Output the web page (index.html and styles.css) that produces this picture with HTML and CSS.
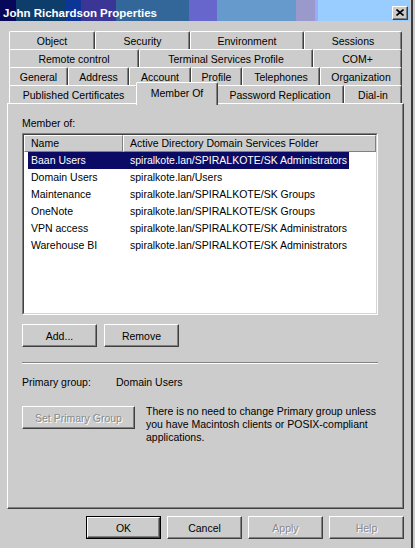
FILE: index.html
```html
<!DOCTYPE html>
<html>
<head>
<meta charset="utf-8">
<link rel="stylesheet" href="styles.css">
</head>
<body>
<div class="window">
  <div class="titlebar">
    <span class="title">John Richardson Properties</span>
    <span class="close"><svg width="8" height="7" viewBox="0 0 8 7"><path d="M0.5 0.5L7.5 6.5M7.5 0.5L0.5 6.5" stroke="#000" stroke-width="1.6" fill="none"/></svg></span>
  </div>
  <div class="content">
    <div class="tabs">
      <div class="tabrow r1">
        <div class="tab">Object</div>
        <div class="tab">Security</div>
        <div class="tab">Environment</div>
        <div class="tab">Sessions</div>
      </div>
      <div class="tabrow r2">
        <div class="tab">Remote control</div>
        <div class="tab">Terminal Services Profile</div>
        <div class="tab">COM+</div>
      </div>
      <div class="tabrow r3">
        <div class="tab">General</div>
        <div class="tab">Address</div>
        <div class="tab">Account</div>
        <div class="tab">Profile</div>
        <div class="tab">Telephones</div>
        <div class="tab">Organization</div>
      </div>
      <div class="tabrow r4">
        <div class="tab">Published Certificates</div>
        <div class="tab active">Member Of</div>
        <div class="tab">Password Replication</div>
        <div class="tab">Dial-in</div>
      </div>
    </div>
    <div class="panel">
      <div class="label">Member of:</div>
      <div class="list">
        <div class="list-inner">
          <div class="lhead">
            <div class="hcell h1">Name</div>
            <div class="hcell h2">Active Directory Domain Services Folder</div>
          </div>
          <div class="lrow sel"><span class="c1">Baan Users</span><span class="c2">spiralkote.lan/SPIRALKOTE/SK Administrators</span></div>
          <div class="lrow"><span class="c1">Domain Users</span><span class="c2">spiralkote.lan/Users</span></div>
          <div class="lrow"><span class="c1">Maintenance</span><span class="c2">spiralkote.lan/SPIRALKOTE/SK Groups</span></div>
          <div class="lrow"><span class="c1">OneNote</span><span class="c2">spiralkote.lan/SPIRALKOTE/SK Groups</span></div>
          <div class="lrow"><span class="c1">VPN access</span><span class="c2">spiralkote.lan/SPIRALKOTE/SK Administrators</span></div>
          <div class="lrow"><span class="c1">Warehouse BI</span><span class="c2">spiralkote.lan/SPIRALKOTE/SK Administrators</span></div>
        </div>
      </div>
      <div class="btnrow">
        <div class="btn">Add...</div>
        <div class="btn">Remove</div>
      </div>
      <div class="sep"></div>
      <div class="prow"><span class="plabel">Primary group:</span><span>Domain Users</span></div>
      <div class="setrow">
        <div class="btn wide disabled">Set Primary Group</div>
        <p class="note">There is no need to change Primary group unless<br>you have Macintosh clients or POSIX-compliant<br>applications.</p>
      </div>
    </div>
    <div class="footer">
      <div class="btn default"><span>OK</span></div>
      <div class="btn">Cancel</div>
      <div class="btn disabled">Apply</div>
      <div class="btn disabled">Help</div>
    </div>
  </div>
</div>
</body>
</html>
```

FILE: styles.css
```css
html, body {
  margin: 0;
  padding: 0;
  background: #cccccc;
}
body {
  font-family: "Liberation Sans", Arial, sans-serif;
  font-size: 10.5px;
  color: #000;
  width: 415px;
  height: 548px;
  overflow: hidden;
}
.window {
  width: 411px;
  height: 548px;
  border-right: 2px solid #3a3a3a;
  background: #cccccc;
}
.titlebar {
  height: 21px;
  box-sizing: border-box;
  padding: 4px 2px 0 3px;
  display: flex;
  align-items: center;
  width: 410px;
  background: linear-gradient(to right,
    #08085a 0, #08085a 16px,
    #0d3d6b 16px, #0d3d6b 65px,
    #0b3596 65px, #0b3596 81px,
    #3b3596 81px, #3b3596 116px,
    #336699 116px, #336699 189px,
    #6666cc 189px, #6666cc 217px,
    #6699cc 217px, #6699cc 296px,
    #9999cc 296px, #9999cc 315px,
    #99aaff 315px, #99aaff 318px,
    #99ccff 318px, #99ccff 100%);
}
.title {
  color: #fff;
  font-weight: bold;
  font-size: 11.5px;
  white-space: nowrap;
}
.close {
  margin-left: auto;
  width: 16px;
  height: 14px;
  box-sizing: border-box;
  background: #cccccc;
  border: 1px solid;
  border-color: #fff #404040 #404040 #fff;
  box-shadow: inset -1px -1px #808080;
  display: flex;
  align-items: center;
  justify-content: center;
}
.close svg { display: block; }

.content {
  padding: 10px 0 0 7px;
}
.tabs {
  margin-left: 2px;
  width: 393px;
}
.tabrow {
  display: grid;
  height: 18px;
}
.r1 { grid-template-columns: 86px 95px 114px 98px; }
.r2 { grid-template-columns: 130px 174px 89px; }
.r3 { grid-template-columns: 59px 61px 62px 51px 78px 82px; }
.r4 { grid-template-columns: 129px 78px 128px 58px; }
.tab {
  box-sizing: border-box;
  border-top: 1px solid #fff;
  border-left: 1px solid #fff;
  border-right: 1px solid #404040;
  box-shadow: inset -1px 0 #808080;
  border-radius: 2px 2px 0 0;
  text-align: center;
  line-height: 18px;
  white-space: nowrap;
  background: #cccccc;
}
.tab.active {
  margin: -3px -2px -1px -2px;
  line-height: 20px;
  position: relative;
  z-index: 2;
}

.panel {
  width: 397px;
  height: 406px;
  box-sizing: border-box;
  border: 1px solid;
  border-color: #fff #404040 #404040 #fff;
  box-shadow: inset -1px -1px #808080;
  padding-left: 14px;
  position: relative;
  z-index: 1;
}
.label {
  margin-top: 13px;
  line-height: 13px;
  height: 13px;
}
.list {
  margin-top: 3px;
  width: 356px;
  height: 182px;
  box-sizing: border-box;
  border: 1px solid;
  border-color: #808080 #fff #fff #808080;
}
.list-inner {
  height: 100%;
  box-sizing: border-box;
  border: 1px solid;
  border-color: #404040 #d4d4d4 #d4d4d4 #404040;
  background: #fff;
}
.lhead {
  display: flex;
  height: 17px;
}
.hcell {
  box-sizing: border-box;
  background: #cccccc;
  border: 1px solid;
  border-color: #fff #808080 #808080 #fff;
  line-height: 15px;
  padding-left: 6px;
  white-space: nowrap;
}
.h1 { width: 99px; }
.h2 { width: 253px; padding-left: 6px; }
.lrow {
  display: flex;
  width: max-content;
  margin-left: 4px;
  height: 17px;
  line-height: 17px;
  white-space: nowrap;
}
.lrow .c1 {
  width: 96px;
  box-sizing: border-box;
  padding-left: 3px;
}
.lrow .c2 {
  padding: 0 2px 0 6px;
}
.lrow.sel {
  background: #0b0b66;
  color: #fff;
}

.btnrow {
  display: flex;
  gap: 7px;
  margin-top: 9px;
}
.btn {
  width: 75px;
  height: 23px;
  box-sizing: border-box;
  border: 1px solid;
  border-color: #fff #404040 #404040 #fff;
  box-shadow: inset -1px -1px #808080;
  background: #cccccc;
  display: flex;
  align-items: center;
  justify-content: center;
  white-space: nowrap;
}
.btn.wide { width: 113px; }
.btn.disabled {
  color: #8a8a8a;
  text-shadow: 1px 1px 0 #fff;
}
.btn.default {
  border: 1px solid #000;
  box-shadow: none;
  padding: 0;
}
.btn.default span {
  flex: 1;
  align-self: stretch;
  display: flex;
  align-items: center;
  justify-content: center;
  border: 1px solid;
  border-color: #fff #404040 #404040 #fff;
  box-shadow: inset -1px -1px #808080;
}
.sep {
  margin-top: 15px;
  width: 356px;
  border-top: 1px solid #808080;
  border-bottom: 1px solid #fff;
  height: 0;
}
.prow {
  display: flex;
  margin-top: 12px;
  line-height: 13px;
}
.plabel {
  width: 94px;
}
.setrow {
  display: flex;
  align-items: flex-start;
  margin-top: 17px;
  gap: 11px;
}
.note {
  margin: -1px 0 0 0;
  line-height: 13px;
  white-space: nowrap;
}
.footer {
  display: flex;
  justify-content: flex-end;
  gap: 6px;
  width: 397px;
  margin-top: 7px;
}
```
